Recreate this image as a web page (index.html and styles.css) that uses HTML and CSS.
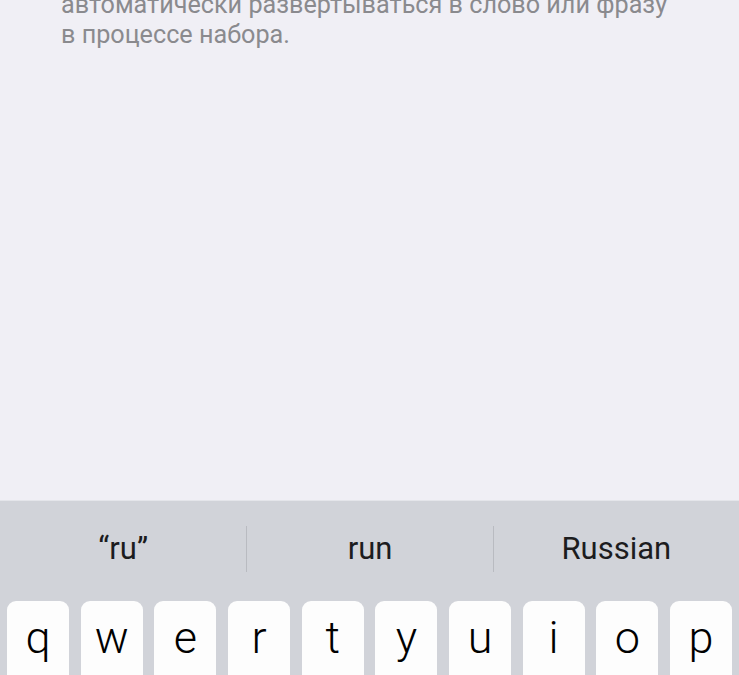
FILE: index.html
```html
<!DOCTYPE html>
<html lang="ru">
<head>
<meta charset="utf-8">
<title>Замена текста</title>
<link rel="stylesheet" href="styles.css">
</head>
<body>
<div class="screen">
  <section class="content">
    <p class="footnote">автоматически развертываться в слово или фразу<br>в процессе набора.</p>
  </section>
  <div class="keyboard">
    <div class="suggestions">
      <div class="suggestion">“ru”</div>
      <div class="suggestion">run</div>
      <div class="suggestion">Russian</div>
    </div>
    <div class="key-row">
      <div class="key">q</div>
      <div class="key">w</div>
      <div class="key">e</div>
      <div class="key">r</div>
      <div class="key">t</div>
      <div class="key">y</div>
      <div class="key">u</div>
      <div class="key">i</div>
      <div class="key">o</div>
      <div class="key">p</div>
    </div>
  </div>
</div>
</body>
</html>
```
FILE: styles.css
```css
html, body {
  margin: 0;
  padding: 0;
  background: #f0eff5;
}

.screen {
  width: 739px;
  height: 675px;
  display: flex;
  flex-direction: column;
  overflow: hidden;
  font-family: Roboto, "Noto Sans", sans-serif;
}

.content {
  flex: 1;
  background: #f0eff5;
}

.footnote {
  margin: -10px 0 0 61px;
  font-size: 25.2px;
  line-height: 30px;
  color: #8a8a8e;
}

.keyboard {
  flex: 0 0 174px;
  background: #d1d3d9;
  border-top: 1px solid #e4e5ea;
  display: flex;
  flex-direction: column;
  overflow: hidden;
}

.suggestions {
  flex: 0 0 96px;
  display: grid;
  grid-template-columns: repeat(3, 1fr);
  align-items: center;
}

.suggestion {
  text-align: center;
  font-size: 31px;
  color: #1c1c1e;
  line-height: 46px;
}

.suggestion + .suggestion {
  border-left: 1px solid #b9bbc1;
}

.key-row {
  flex: 0 0 auto;
  margin-top: 4px;
  padding: 0 7px;
  display: grid;
  grid-template-columns: repeat(10, 1fr);
  column-gap: 11.7px;
}

.key {
  height: 90px;
  background: #fdfdfd;
  border-radius: 9px;
  font-size: 45px;
  font-weight: 300;
  color: #000;
  text-align: center;
  line-height: 74px;
}
```
